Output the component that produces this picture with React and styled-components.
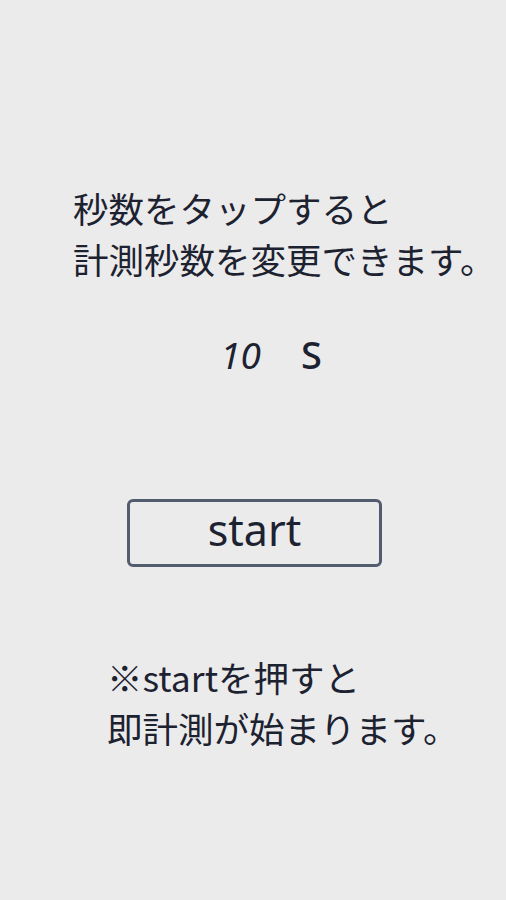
import React, { useState } from 'react';
import styled, { createGlobalStyle } from 'styled-components';

const GlobalStyle = createGlobalStyle`
  html, body {
    margin: 0;
    padding: 0;
    background: #ebebeb;
  }
  body {
    font-family: "Noto Sans CJK JP", "Noto Sans", sans-serif;
    color: #1d2231;
  }
`;

const Screen = styled.div`
  width: 506px;
  height: 900px;
  background: #ebebeb;
  display: flex;
  flex-direction: column;
`;

const Note = styled.p`
  margin: ${(p) => p.$top}px 0 0;
  padding-left: ${(p) => p.$indent}px;
  font-size: 35.5px;
  line-height: 51px;
  white-space: nowrap;
`;

const SecondsRow = styled.div`
  display: flex;
  justify-content: center;
  align-items: baseline;
  gap: 40px;
  margin-top: 44px;
  padding-left: 36px;
  font-family: "Noto Sans", sans-serif;
  line-height: 52px;
`;

const Seconds = styled.span`
  font-size: 37px;
  font-style: italic;
  cursor: pointer;
`;

const Unit = styled.span`
  font-size: 38px;
  font-weight: 500;
`;

const StartButton = styled.button`
  align-self: flex-start;
  margin: 118px 0 0 127px;
  width: 255px;
  height: 68px;
  border: 3px solid #535b6f;
  border-radius: 6px;
  background: transparent;
  color: #1d2231;
  font-family: "Noto Sans", sans-serif;
  font-size: 43px;
  line-height: 1;
  padding: 0 0 8px;
  cursor: pointer;
`;

export default function App() {
  const [seconds, setSeconds] = useState(10);

  return (
    <Screen>
      <GlobalStyle />
      <Note $indent={73} $top={182}>
        秒数をタップすると
        <br />
        計測秒数を変更できます。
      </Note>
      <SecondsRow>
        <Seconds onClick={() => setSeconds((s) => (s >= 60 ? 10 : s + 10))}>{seconds}</Seconds>
        <Unit>S</Unit>
      </SecondsRow>
      <StartButton>start</StartButton>
      <Note $indent={107} $top={84}>
        ※startを押すと
        <br />
        即計測が始まります。
      </Note>
    </Screen>
  );
}
